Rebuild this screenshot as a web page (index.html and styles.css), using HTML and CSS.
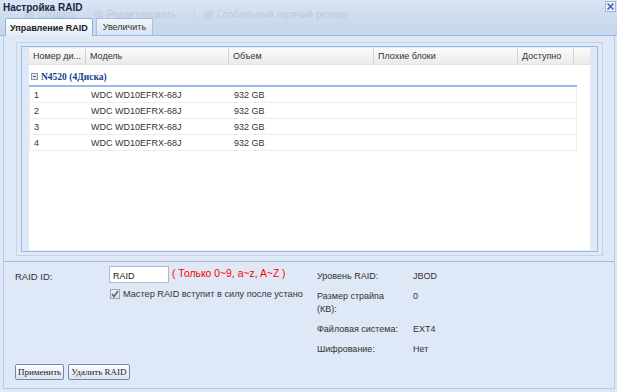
FILE: index.html
```html
<!DOCTYPE html>
<html lang="ru">

<head>
    <meta charset="UTF-8" />
    <title>Настройка RAID</title>
    <link rel="stylesheet" href="styles.css">
</head>

<body>
    <div class="window">
        <div class="title-bar">
            <div class="ghost-toolbar">
                <span class="ghost-icon"></span><span class="ghost-text">Создать</span>
                <span class="ghost-icon"></span><span class="ghost-text">Редактировать</span>
                <span class="ghost-sep"></span>
                <span class="ghost-icon"></span><span class="ghost-text">Глобальный горячий резерв</span>
            </div>
            <span class="title">Настройка RAID</span>
            <span class="close">
                <svg width="9" height="9" viewBox="0 0 9 9">
                    <path d="M1.5 1.5 L7.5 7.5 M7.5 1.5 L1.5 7.5" stroke="#3d63a8" stroke-width="1.6" />
                </svg>
            </span>
        </div>

        <div class="tab-strip">
            <div class="tab active">Управление RAID</div>
            <div class="tab">Увеличить</div>
        </div>

        <div class="tab-body">
            <div class="grid-frame">
                <div class="grid-inner">
                    <div class="grid">
                        <div class="grid-header">
                            <div class="cell c1">Номер ди...</div>
                            <div class="cell c2">Модель</div>
                            <div class="cell c3">Объем</div>
                            <div class="cell c4">Плохие блоки</div>
                            <div class="cell c5">Доступно</div>
                            <div class="cell c6"></div>
                        </div>
                        <div class="group-row">
                            <svg class="group-icon" width="7" height="7" viewBox="0 0 7 7">
                                <rect x="0.5" y="0.5" width="6" height="6" fill="#e4e8ee" stroke="#8a97a8" />
                                <path d="M2 3.5 H5" stroke="#4a5668" stroke-width="1" />
                            </svg>
                            <span class="group-title">N4520 (4Диска)</span>
                        </div>
                        <div class="grid-row">
                            <div class="cell c1">1</div>
                            <div class="cell c2">WDC WD10EFRX-68J</div>
                            <div class="cell c3">932 GB</div>
                            <div class="cell c4"></div>
                            <div class="cell c5"></div>
                        </div>
                        <div class="grid-row">
                            <div class="cell c1">2</div>
                            <div class="cell c2">WDC WD10EFRX-68J</div>
                            <div class="cell c3">932 GB</div>
                            <div class="cell c4"></div>
                            <div class="cell c5"></div>
                        </div>
                        <div class="grid-row">
                            <div class="cell c1">3</div>
                            <div class="cell c2">WDC WD10EFRX-68J</div>
                            <div class="cell c3">932 GB</div>
                            <div class="cell c4"></div>
                            <div class="cell c5"></div>
                        </div>
                        <div class="grid-row">
                            <div class="cell c1">4</div>
                            <div class="cell c2">WDC WD10EFRX-68J</div>
                            <div class="cell c3">932 GB</div>
                            <div class="cell c4"></div>
                            <div class="cell c5"></div>
                        </div>
                    </div>
                </div>
            </div>

            <div class="form-area">
                <div class="form-cols">
                    <div class="form-left">
                        <div class="field">
                            <label class="field-label" for="raid-id">RAID ID:</label>
                            <input class="text-input" id="raid-id" type="text" value="RAID" />
                            <span class="hint">( Только 0~9, a~z, A~Z )</span>
                        </div>
                        <div class="check-line">
                            <span class="checkbox">
                                <svg width="8" height="8" viewBox="0 0 8 8">
                                    <path d="M1 4 L3 6.5 L7 1" fill="none" stroke="#4b5f80" stroke-width="1.5" />
                                </svg>
                            </span>
                            <span class="check-label">Мастер RAID вступит в силу после устано</span>
                        </div>
                    </div>
                    <div class="form-right">
                        <div class="info-row"><span class="info-label">Уровень RAID:</span><span class="info-value">JBOD</span></div>
                        <div class="info-row"><span class="info-label">Размер страйпа (КВ):</span><span class="info-value">0</span></div>
                        <div class="info-row"><span class="info-label">Файловая система:</span><span class="info-value">EXT4</span></div>
                        <div class="info-row"><span class="info-label">Шифрование:</span><span class="info-value">Нет</span></div>
                    </div>
                </div>
                <div class="buttons">
                    <button class="btn">Применить</button>
                    <button class="btn">Удалить RAID</button>
                </div>
            </div>
        </div>
    </div>
</body>

</html>
```

FILE: styles.css
```css
*,
::after,
::before {
    box-sizing: border-box;
    padding: 0;
    margin: 0;
}

body {
    width: 617px;
    height: 392px;
    overflow: hidden;
    background-color: #dfe8f6;
    font-family: "Liberation Sans", Arial, sans-serif;
    font-size: 9px;
    color: #333;
}

.window {
    display: flex;
    flex-direction: column;
    height: 392px;
}

/* title + faded toolbar behind it */
.title-bar {
    position: relative;
    height: 16px;
    display: flex;
    align-items: center;
    justify-content: space-between;
    padding: 0 1px 0 3px;
    background: linear-gradient(#dbe6f4, #cfdcee);
}

.title {
    position: relative;
    font-weight: bold;
    font-size: 10px;
    color: #15283f;
    margin-top: -2px;
}

.ghost-toolbar {
    position: absolute;
    left: 25px;
    top: 8px;
    display: flex;
    align-items: center;
    gap: 4px;
    opacity: 0.2;
    color: #6d7f98;
    font-size: 10px;
}

.ghost-icon {
    width: 9px;
    height: 9px;
    border-radius: 2px;
    background: #a6b4c6;
}

.ghost-text {
    margin-right: 14px;
}

.ghost-sep {
    width: 1px;
    height: 12px;
    background: #9fb0c8;
    margin-right: 5px;
}

.close {
    position: relative;
    width: 11px;
    height: 11px;
    margin-top: -3px;
    border: 1px solid #9db7dc;
    background: #eef3fa;
    display: flex;
    align-items: center;
    justify-content: center;
}

/* tabs */
.tab-strip {
    height: 20px;
    display: flex;
    align-items: flex-end;
    gap: 3px;
    padding-left: 5px;
    background: linear-gradient(#cfdcee, #c6d6ec);
    border-bottom: 1px solid #99bbe8;
}

.tab {
    height: 17px;
    padding: 0 6px;
    display: flex;
    align-items: center;
    border: 1px solid #a9c1e2;
    border-bottom: none;
    border-radius: 2px 2px 0 0;
    background: linear-gradient(#f1f5fb, #d8e4f3);
    color: #333;
}

.tab.active {
    height: 18px;
    padding: 0 4px;
    font-weight: bold;
    color: #1c1c1c;
    border-color: #8db2e3;
    background: linear-gradient(#ffffff, #e3ebf7);
    margin-bottom: -1px;
}

/* tab body */
.tab-body {
    flex: 1;
    margin: 0 2px 3px 3px;
    border: 1px solid #b7cbe6;
    border-top: none;
    display: flex;
    flex-direction: column;
}

.grid-frame {
    margin: 6px 11px 0 12px;
    height: 214px;
    border: 1px solid #c9d3e0;
    padding: 3px 4px 3px 4px;
}

.grid-inner {
    height: 100%;
    border: 1px solid #99bbe8;
    padding: 1px 7px 1px 7px;
}

.grid {
    height: 100%;
    background: #fff;
}

.grid-header {
    display: flex;
    height: 17px;
    background: linear-gradient(#fafafa, #ebebeb);
    border-bottom: 1px solid #e2e2e2;
}

.cell {
    display: flex;
    align-items: center;
    padding-left: 4px;
    white-space: nowrap;
    overflow: hidden;
}

.grid-header .cell {
    border-right: 1px solid #d3d3d3;
}

.grid-header .cell.c6 {
    border-right: none;
    flex: 1;
}

.c1 { width: 57px; }
.c2 { width: 143px; }
.c3 { width: 145px; }
.c4 { width: 144px; }
.c5 { width: 56px; }

.group-row {
    height: 22px;
    width: 548px;
    display: flex;
    align-items: center;
    gap: 3px;
    padding: 3px 0 0 2px;
    border-bottom: 2px solid #99bbe8;
}

.group-title {
    font-family: "Liberation Serif", "Times New Roman", serif;
    font-weight: bold;
    font-size: 9.5px;
    color: #15428b;
}

.grid-row {
    display: flex;
    width: 548px;
    height: 16px;
    border: 1px solid #ededed;
    border-top: none;
}

/* bottom form */
.form-area {
    flex: 1;
    margin-top: 5px;
    border-top: 1px solid #a9b8cc;
    display: flex;
    flex-direction: column;
    padding: 4px 0 0 11px;
}

.form-cols {
    display: flex;
    height: 98px;
}

.form-left {
    width: 302px;
}

.field {
    display: flex;
    align-items: center;
    height: 17px;
}

.field-label {
    width: 94px;
    font-size: 9.5px;
    padding-top: 3px;
}

.text-input {
    width: 60px;
    height: 17px;
    border: 1px solid #b5b8c8;
    background: #fff;
    font-family: "Liberation Sans", Arial, sans-serif;
    font-size: 9px;
    padding: 2px 0 0 3px;
    color: #222;
}

.hint {
    margin-left: 3px;
    color: #f00;
    font-size: 10.4px;
    margin-top: -3px;
}

.check-line {
    display: flex;
    align-items: center;
    gap: 3px;
    margin: 6px 0 0 95px;
}

.checkbox {
    width: 10px;
    height: 10px;
    border: 1px solid #9ea6b3;
    background: linear-gradient(#eef0f3, #d8dce3);
    display: flex;
    align-items: center;
    justify-content: center;
}

.check-label {
    font-size: 9.2px;
}

.form-right {
    display: flex;
    flex-direction: column;
    gap: 7px;
    padding-top: 4px;
}

.info-row {
    display: flex;
    line-height: 13px;
}

.info-label {
    width: 96px;
    padding-right: 10px;
}

/* buttons */
.buttons {
    display: flex;
    gap: 4px;
}

.btn {
    height: 16px;
    padding: 0 2px;
    border: 1px solid #7088ad;
    border-radius: 2px;
    background: linear-gradient(#ffffff, #dae3ef);
    font-family: "Liberation Serif", "Times New Roman", serif;
    font-size: 9px;
    color: #222;
}
```
